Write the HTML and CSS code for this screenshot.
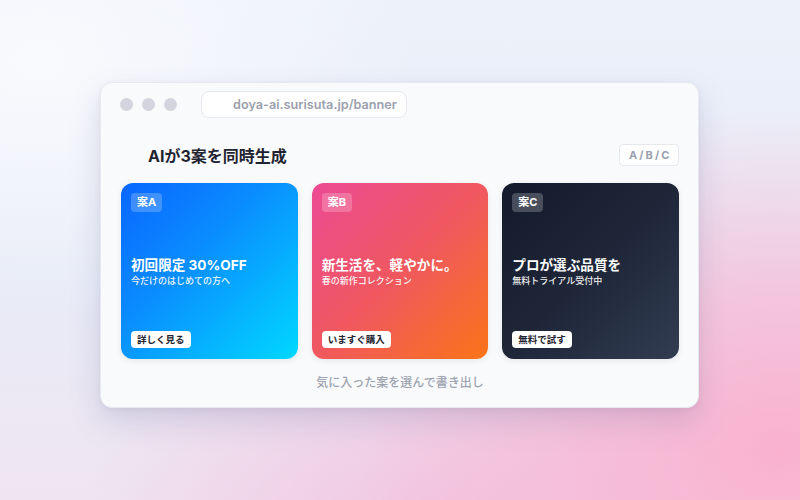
FILE: index.html
```html
<!DOCTYPE html>
<html lang="ja">
<head>
    <meta charset="UTF-8">
    <meta name="viewport" content="width=device-width, initial-scale=1.0">
    <title>ドヤAI バナー</title>
    <link rel="stylesheet" href="styles.css">
</head>
<body>
    <div class="window">
        <div class="titlebar">
            <div class="dots">
                <span class="dot"></span>
                <span class="dot"></span>
                <span class="dot"></span>
            </div>
            <div class="url">doya-ai.surisuta.jp/banner</div>
        </div>

        <div class="content">
            <div class="head">
                <h1>AIが3案を同時生成</h1>
                <span class="abc">A / B / C</span>
            </div>

            <div class="cards">
                <div class="card card-a">
                    <span class="tag">案A</span>
                    <div class="copy">
                        <div class="title">初回限定 30%OFF</div>
                        <div class="sub">今だけのはじめての方へ</div>
                    </div>
                    <span class="cta">詳しく見る</span>
                </div>
                <div class="card card-b">
                    <span class="tag">案B</span>
                    <div class="copy">
                        <div class="title">新生活を、軽やかに。</div>
                        <div class="sub">春の新作コレクション</div>
                    </div>
                    <span class="cta">いますぐ購入</span>
                </div>
                <div class="card card-c">
                    <span class="tag">案C</span>
                    <div class="copy">
                        <div class="title">プロが選ぶ品質を</div>
                        <div class="sub">無料トライアル受付中</div>
                    </div>
                    <span class="cta">無料で試す</span>
                </div>
            </div>

            <p class="hint">気に入った案を選んで書き出し</p>
        </div>
    </div>
</body>
</html>
```

FILE: styles.css
```css
body {
    margin: 0;
    height: 500px;
    overflow: hidden;
    font-family: Inter, "Noto Sans CJK JP", sans-serif;
    background-color: #eef1f8;
    background-image:
        radial-gradient(ellipse 420px 340px at 780px 450px, #f9b1cf 0%, rgba(249, 177, 207, 0.65) 45%, rgba(249, 177, 207, 0) 100%),
        radial-gradient(ellipse 360px 240px at 440px 530px, rgba(242, 190, 222, 0.85) 0%, rgba(242, 190, 222, 0) 100%),
        radial-gradient(ellipse 380px 260px at 40px 60px, #f8fafd 0%, rgba(248, 250, 253, 0) 100%),
        linear-gradient(180deg, #edf1fa 0%, #e7ebf7 55%, #efe5f1 100%);
    display: flex;
    justify-content: center;
    padding-top: 82px;
    box-sizing: border-box;
}

.window {
    width: 599px;
    height: 326px;
    margin-left: -1px;
    background-color: #f9fafc;
    border: 1px solid #e7e9f0;
    border-radius: 12px;
    box-shadow: 0 14px 30px rgba(110, 110, 160, 0.22), 0 2px 6px rgba(0, 0, 0, 0.05);
    box-sizing: border-box;
}

.titlebar {
    display: flex;
    align-items: center;
    height: 42px;
    padding: 0 0 0 19px;
}
.dots {
    display: flex;
    gap: 9px;
}
.dot {
    width: 13px;
    height: 13px;
    border-radius: 50%;
    background-color: #d3d5de;
}
.url {
    margin-left: 24px;
    width: 206px;
    height: 27px;
    box-sizing: border-box;
    padding-left: 31px;
    line-height: 25px;
    font-size: 12.7px;
    font-weight: 600;
    color: #9ca0ad;
    background-color: #fff;
    border: 1px solid #e6e8ee;
    border-radius: 8px;
}

.content {
    padding: 18px 19px 0 20px;
}
.head {
    display: flex;
    justify-content: space-between;
    align-items: center;
    height: 24px;
    margin-bottom: 16px;
}
h1 {
    margin: 0 0 0 27px;
    font-size: 16px;
    font-weight: 700;
    color: #1f2430;
}
.abc {
    padding: 3px 8px 3px 9px;
    font-size: 11px;
    font-weight: 700;
    letter-spacing: 0.5px;
    word-spacing: -1.5px;
    color: #9aa1b0;
    background-color: #fff;
    border: 1px solid #e6e8ee;
    border-radius: 4px;
}

.cards {
    display: grid;
    grid-template-columns: repeat(3, 1fr);
    gap: 14px;
}
.card {
    height: 176px;
    border-radius: 12px;
    padding: 10px 10px 11px 10px;
    box-sizing: border-box;
    display: flex;
    flex-direction: column;
    justify-content: space-between;
    align-items: flex-start;
    color: #fff;
    box-shadow: 0 2px 6px rgba(0, 0, 0, 0.08);
}
.card-a {
    background: linear-gradient(135deg, #0a66ff 0%, #0a8cff 40%, #00d8ff 100%);
}
.card-b {
    background: linear-gradient(135deg, #ec4a94 0%, #f0585f 50%, #fa7418 100%);
}
.card-c {
    background: linear-gradient(135deg, #121a2c 0%, #1e2638 50%, #323d52 100%);
}
.tag {
    padding: 2px 6px;
    font-size: 11px;
    font-weight: 700;
    line-height: 15px;
    border-radius: 4px;
    background-color: rgba(255, 255, 255, 0.22);
}
.title {
    font-size: 13.6px;
    font-weight: 700;
    line-height: 18px;
}
.sub {
    font-size: 9px;
    font-weight: 500;
    line-height: 14px;
    opacity: 0.92;
}
.cta {
    padding: 2px 6px;
    font-size: 9.5px;
    font-weight: 700;
    line-height: 13px;
    color: #1f2430;
    background-color: #fff;
    border-radius: 4px;
}

.hint {
    margin: 14px 0 0;
    text-align: center;
    font-size: 12px;
    font-weight: 500;
    color: #9ca3af;
}
```
